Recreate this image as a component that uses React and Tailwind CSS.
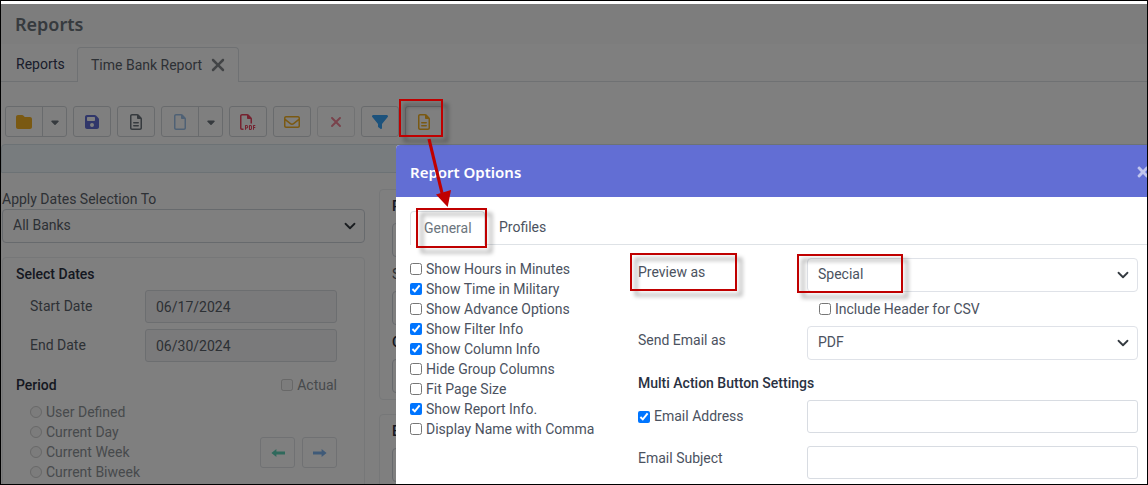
import { useState } from 'react'
import {
  FaCaretDown,
  FaFilter,
  FaFloppyDisk,
  FaFolder,
  FaRegEnvelope,
  FaRegFile,
  FaRegFileLines,
  FaRegFilePdf,
  FaXmark,
} from 'react-icons/fa6'
import { FaTimes } from 'react-icons/fa'

const reportFlags = [
  { label: 'Show Hours in Minutes', checked: false },
  { label: 'Show Time in Military', checked: true },
  { label: 'Show Advance Options', checked: false },
  { label: 'Show Filter Info', checked: true },
  { label: 'Show Column Info', checked: true },
  { label: 'Hide Group Columns', checked: false },
  { label: 'Fit Page Size', checked: false },
  { label: 'Show Report Info.', checked: true },
  { label: 'Display Name with Comma', checked: false },
]

const periods = ['User Defined', 'Current Day', 'Current Week', 'Current Biweek']

function ToolButton({ label, children, className = '' }) {
  return (
    <button
      type="button"
      aria-label={label}
      className={`flex h-[31px] w-[38px] items-center justify-center rounded-[3px] border border-[#d3d6da] ${className}`}
    >
      {children}
    </button>
  )
}

function SplitButton({ label, children }) {
  return (
    <div className="flex h-[31px] rounded-[3px] border border-[#d3d6da]">
      <button type="button" aria-label={label} className="flex w-[36px] items-center justify-center">
        {children}
      </button>
      <button
        type="button"
        aria-label={`${label} menu`}
        className="flex w-[24px] items-center justify-center border-l border-[#d3d6da]"
      >
        <FaCaretDown size={12} className="text-[#6c757d]" />
      </button>
    </div>
  )
}

function SelectBox({ id, options, className = '' }) {
  return (
    <div className="relative">
      <select
        id={id}
        className={`block h-[34px] w-full appearance-none rounded border bg-transparent pr-8 pb-px pl-2.5 ${className}`}
      >
        {options.map((option) => (
          <option key={option}>{option}</option>
        ))}
      </select>
      <svg
        viewBox="0 0 16 16"
        className="pointer-events-none absolute top-[11px] right-[9px] size-3 text-[#343a40]"
        fill="none"
        stroke="currentColor"
        strokeWidth="2.4"
        strokeLinecap="round"
        strokeLinejoin="round"
      >
        <path d="m2 5 6 6 6-6" />
      </svg>
    </div>
  )
}

function Toolbar() {
  return (
    <div className="flex gap-1.5 px-1 pt-6 pb-[7px]">
      <SplitButton label="Open">
        <FaFolder size={16} className="text-[#f5b225]" />
      </SplitButton>
      <ToolButton label="Save">
        <FaFloppyDisk size={16} className="text-[#626ed4]" />
      </ToolButton>
      <ToolButton label="Preview">
        <FaRegFileLines size={16} className="text-[#6c757d]" />
      </ToolButton>
      <SplitButton label="New">
        <FaRegFile size={16} className="text-[#9ec3ea]" />
      </SplitButton>
      <ToolButton label="Export PDF">
        <FaRegFilePdf size={16} className="text-[#ec4561]" />
      </ToolButton>
      <ToolButton label="Email">
        <FaRegEnvelope size={16} className="text-[#f5b225]" />
      </ToolButton>
      <ToolButton label="Delete" className="opacity-65">
        <FaXmark size={16} className="text-[#ec4561]" />
      </ToolButton>
      <ToolButton label="Filter">
        <FaFilter size={16} className="text-[#38a4f8]" />
      </ToolButton>
      <ToolButton label="Report options">
        <FaRegFileLines size={16} className="text-[#f5b225]" />
      </ToolButton>
    </div>
  )
}

function DateRow({ id, label, value }) {
  return (
    <div className="flex items-center pl-3.5">
      <label htmlFor={id} className="w-[115px]">
        {label}
      </label>
      <input
        id={id}
        readOnly
        defaultValue={value}
        className="h-[33px] w-[192px] rounded-[3px] border border-[#d9dce0] bg-[#f5f5f6] px-2.5"
      />
    </div>
  )
}

function PeriodStep({ label, className, path }) {
  return (
    <button
      type="button"
      aria-label={label}
      className={`flex h-[31px] w-[35px] items-center justify-center rounded-[3px] border border-[#e0e2e6] ${className}`}
    >
      <svg viewBox="0 0 14 10" className="h-2.5 w-3.5" fill="currentColor">
        <path d={path} />
      </svg>
    </button>
  )
}

function DatesColumn() {
  return (
    <div className="w-[363px] shrink-0">
      <label htmlFor="applyTo" className="block leading-5">
        Apply Dates Selection To
      </label>
      <SelectBox id="applyTo" options={['All Banks']} className="border-[#ced4da]" />

      <section className="mt-3.5 h-[300px] rounded border border-[#eceef1] px-[13px] pt-1.5">
        <h2 className="font-medium leading-5 text-[#2a3142]">Select Dates</h2>
        <div className="mt-1.5 flex flex-col gap-1.5">
          <DateRow id="startDate" label="Start Date" value="06/17/2024" />
          <DateRow id="endDate" label="End Date" value="06/30/2024" />
        </div>

        <div className="mt-[13px] flex items-center justify-between pr-3.5 leading-5">
          <h2 className="font-medium text-[#2a3142]">Period</h2>
          <label className="flex items-center gap-1 text-[#8f9499]">
            <input type="checkbox" disabled className="size-3" />
            Actual
          </label>
        </div>

        <div className="mt-[7px] flex justify-between pr-3.5 pl-3.5">
          <div>
            {periods.map((period) => (
              <label key={period} className="flex items-center gap-1 leading-5 text-[#8f9499]">
                <input type="radio" name="period" disabled className="size-3" />
                {period}
              </label>
            ))}
          </div>
          <div className="flex gap-[7px] pt-[35px]">
            <PeriodStep
              label="Previous period"
              className="text-[#5fd3b8]"
              path="M5.4 1v2.6H14v2.8H5.4V9L0.4 5Z"
            />
            <PeriodStep
              label="Next period"
              className="text-[#7fb5f0]"
              path="M8.6 1v2.6H0v2.8h8.6V9l5-4Z"
            />
          </div>
        </div>
      </section>
    </div>
  )
}

function CardField({ initial, bold = false }) {
  return (
    <div>
      <p className={`leading-5 ${bold ? 'font-medium text-[#2a3142]' : ''}`}>{initial}</p>
      <div className="mt-[7px] h-[34px] rounded border border-[#ced4da]" />
    </div>
  )
}

function SettingsColumn() {
  return (
    <div className="flex min-w-0 grow flex-col gap-3.5">
      <section className="flex flex-col gap-[7px] rounded border border-[#eceef1] px-3 pt-1.5 pb-1.5">
        <CardField initial="P" bold />
        <CardField initial="S" />
        <CardField initial="O" bold />
      </section>
      <section className="rounded border border-[#eceef1] px-3 pt-1.5 pb-12">
        <CardField initial="E" bold />
      </section>
    </div>
  )
}

function ReportsPage() {
  return (
    <div className="bg-white text-[#5b626b]">
      <header className="flex h-10 items-center bg-[#fafafa] px-3.5">
        <h1 className="font-['Noto_Sans'] text-[18px] font-semibold text-[#6c757d]">Reports</h1>
      </header>

      <nav className="flex h-[38px] items-end border-b border-[#dee2e6] pl-px">
        <a href="#reports" className="flex h-[34px] w-[75px] items-center pl-3.5 text-[#343a56]">
          Reports
        </a>
        <div className="-mb-px flex h-[35px] w-[162px] items-center justify-between rounded-t border border-b-0 border-[#dee2e6] bg-white pr-2.5 pl-[13px]">
          <a href="#time-bank">Time Bank Report</a>
          <button type="button" aria-label="Close tab">
            <FaXmark size={20} className="text-[#85898d]" />
          </button>
        </div>
      </nav>

      <Toolbar />

      <div className="h-[29px] rounded-tl border border-[#d9e4ea] bg-[#f0f8fc]" />

      <div className="flex gap-3.5 pt-4 pl-px">
        <DatesColumn />
        <SettingsColumn />
      </div>
    </div>
  )
}

function OptionsDialog() {
  const [flags, setFlags] = useState(reportFlags)
  const [emailOn, setEmailOn] = useState(true)

  const toggleFlag = (label) => {
    setFlags(flags.map((flag) => (flag.label === label ? { ...flag, checked: !flag.checked } : flag)))
  }

  return (
    <div
      role="dialog"
      aria-labelledby="dialogTitle"
      className="absolute top-[144px] -right-5 bottom-0 left-[395px] overflow-hidden rounded-t bg-white text-[#4b5260]"
    >
      <header className="flex h-[52px] items-center justify-between bg-[#626ed4] pt-0.5 pr-4 pl-3.5 text-white">
        <h2 id="dialogTitle" className="font-['Noto_Sans'] text-[15px] font-semibold">
          Report Options
        </h2>
        <button type="button" aria-label="Close" className="opacity-60">
          <FaTimes size={16} />
        </button>
      </header>

      <div className="px-3.5 pt-3.5">
        <nav className="flex h-[34px] border-b border-[#dee2e6]">
          <a
            href="#general"
            className="-mb-px flex w-[75px] items-center rounded-t border border-b-0 border-[#dee2e6] bg-white pl-[13px] text-[#6c757d]"
          >
            General
          </a>
          <a href="#profiles" className="flex items-center px-3.5">
            Profiles
          </a>
        </nav>

        <div className="flex pt-[13px] pr-[15px]">
          <div className="w-[228px] shrink-0 pt-px">
            {flags.map((flag) => (
              <label key={flag.label} className="flex items-center gap-1 leading-5">
                <input
                  type="checkbox"
                  checked={flag.checked}
                  onChange={() => toggleFlag(flag.label)}
                  className="size-3"
                />
                {flag.label}
              </label>
            ))}
          </div>

          <div className="grid grow grid-cols-[169px_1fr]">
            <label htmlFor="previewAs" className="pt-1 leading-5">
              Preview as
            </label>
            <SelectBox id="previewAs" options={['Special']} className="border-[#dfe2e8]" />

            <label className="col-start-2 flex h-[34px] items-center gap-1 pl-3">
              <input type="checkbox" className="size-3" />
              Include Header for CSV
            </label>

            <label htmlFor="sendAs" className="pt-1 leading-5">
              Send Email as
            </label>
            <SelectBox id="sendAs" options={['PDF']} className="border-[#dfe2e8]" />

            <h3 className="col-span-2 mt-[13px] mb-[7px] leading-5 font-medium text-[#2a3142]">
              Multi Action Button Settings
            </h3>

            <label className="flex items-center gap-1">
              <input
                type="checkbox"
                checked={emailOn}
                onChange={(event) => setEmailOn(event.target.checked)}
                className="size-3"
              />
              Email Address
            </label>
            <input
              type="email"
              aria-label="Email Address"
              className="h-[33px] rounded-[3px] border border-[#d8dce2] px-2.5"
            />

            <label htmlFor="subject" className="mt-[13px] pt-0.5 leading-5">
              Email Subject
            </label>
            <input
              id="subject"
              type="text"
              className="mt-[13px] h-[33px] rounded-[3px] border border-[#d8dce2] px-2.5"
            />
          </div>
        </div>
      </div>
    </div>
  )
}

// Red frames and the arrow that walk the reader through the steps
function Callouts() {
  const frame = 'absolute border-2 border-[#c00000] drop-shadow-[5px_5px_2px_rgba(0,0,0,0.4)]'
  return (
    <div className="pointer-events-none absolute inset-0">
      <div className={`${frame} top-[98px] left-[398px] h-[38px] w-[44px]`} />
      <div className={`${frame} top-[207px] left-[415px] h-[40px] w-[71px]`} />
      <div className={`${frame} top-[252px] left-[629px] h-[38px] w-[107px]`} />
      <div className={`${frame} top-[253px] left-[796px] h-[39px] w-[106px]`} />
      <svg viewBox="0 0 26 70" className="absolute top-[137px] left-[426px] h-[70px] w-[26px]">
        <path d="M2 1 15 55" stroke="#c00000" strokeWidth="3.2" />
        <path d="m9 56.5 15-4.5-3.3 17Z" fill="#c00000" />
      </svg>
    </div>
  )
}

function App() {
  return (
    <div className="h-screen border border-black bg-white font-[Roboto] text-[14px]">
      <div className="relative h-full overflow-hidden pt-[3px]">
        <ReportsPage />
        <div className="absolute inset-x-0 top-[3px] bottom-0 bg-black/50" />
        <OptionsDialog />
        <Callouts />
      </div>
    </div>
  )
}

export default App
